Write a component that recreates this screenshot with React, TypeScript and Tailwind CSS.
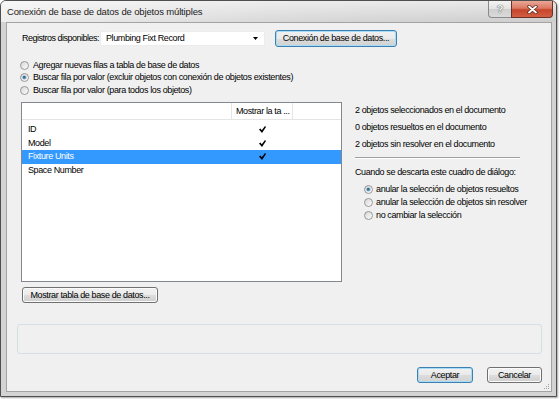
import React from "react";

function Radio({ checked }: { checked?: boolean }) {
  return (
    <svg width="9" height="9" viewBox="0 0 9 9" className="shrink-0">
      <defs>
        <linearGradient id="rb" x1="0" y1="0" x2="1" y2="1">
          <stop offset="0" stopColor="#d4d4d4" />
          <stop offset="1" stopColor="#ffffff" />
        </linearGradient>
        <radialGradient id="rd" cx="0.4" cy="0.4" r="0.6">
          <stop offset="0" stopColor="#1f4f73" />
          <stop offset="1" stopColor="#8cbfe0" />
        </radialGradient>
      </defs>
      <circle cx="4.5" cy="4.5" r="4" fill="url(#rb)" stroke="#8f8f8f" strokeWidth="0.9" />
      {checked && <circle cx="4.5" cy="4.5" r="2.1" fill="url(#rd)" />}
    </svg>
  );
}

function Check() {
  return (
    <svg width="7" height="7" viewBox="0 0 7 7">
      <path d="M0 3.6 L1.4 2.6 L2.8 4.3 L6 0 L7 0.9 L3 6.9 Z" fill="#000" />
    </svg>
  );
}

const btnNormal =
  "flex items-center justify-center whitespace-nowrap rounded-[3px] border border-[#707070] bg-[linear-gradient(#f2f2f2_0%,#ebebeb_50%,#dddddd_51%,#cfcfcf_100%)] shadow-[inset_0_0_0_1px_#fbfbfb]";
const btnDefault =
  "flex items-center justify-center whitespace-nowrap rounded-[3px] border border-[#3c7fb1] bg-[linear-gradient(#f1f1f1_0%,#e9e9e9_50%,#dcdcdc_51%,#d2d2d2_100%)] shadow-[inset_0_0_0_1px_#a6dcf6]";

const App = () => {
  const rows = [
    { name: "ID", show: true },
    { name: "Model", show: true },
    { name: "Fixture Units", show: true, selected: true },
    { name: "Space Number", show: false },
  ];

  return (
    <div className="w-[560px] h-[399px] bg-white font-['Liberation_Sans',Arial,sans-serif] text-[9px] leading-none tracking-[-0.38px] text-black whitespace-nowrap">
      <div className="w-[557px] h-[397px] flex flex-col rounded-t-[6px] border border-[#4f4f4f] bg-[#d3d3d3] shadow-[1px_1px_2px_rgba(0,0,0,0.35)]">
        {/* Title bar */}
        <div className="h-[21px] flex justify-between rounded-t-[5px] bg-[linear-gradient(to_bottom,rgba(255,255,255,0.55),rgba(255,255,255,0)),linear-gradient(to_right,#ededed,#d6d6d6_55%,#cdcdcd)]">
          <div className="pl-[6px] pt-[6px] text-[9.5px] tracking-[-0.15px] text-[#1b1b1b]">
            Conexión de base de datos de objetos múltiples
          </div>
          <div className="flex mr-[3px] h-[17px]">
            <div className="w-[23px] h-[17px] flex items-center justify-center rounded-bl-[4px] border border-t-0 border-r-0 border-[#8a8a8a] bg-[linear-gradient(#f4f4f4,#e2e2e2_50%,#cfcfcf_51%,#dadada)]">
              <span className="text-[11px] font-bold text-[#f4f4f4] [text-shadow:0_0_1px_#555,0_0_1px_#555]">
                ?
              </span>
            </div>
            <div className="w-[42px] h-[17px] flex items-center justify-center rounded-br-[4px] border border-t-0 border-[#6e3023] bg-[linear-gradient(#eaa898,#db7862_45%,#c5452b_55%,#d45e42)]">
              <svg width="11" height="9" viewBox="0 0 11 9">
                <path d="M2 1.5 L9 7.5 M9 1.5 L2 7.5" stroke="#5b2a20" strokeWidth="3.4" strokeLinecap="round" />
                <path d="M2 1.5 L9 7.5 M9 1.5 L2 7.5" stroke="#ffffff" strokeWidth="1.8" strokeLinecap="round" />
              </svg>
            </div>
          </div>
        </div>

        {/* Client area */}
        <div className="relative ml-[5px] w-[546px] h-[370px] flex flex-col border border-[#a3a3a3] bg-[#f0f0f0]">
          {/* Record selection */}
          <div className="mt-[7px] h-[17px] flex items-center pl-[15px]">
            <div className="w-[78px] shrink-0 tracking-[-0.5px]">Registros disponibles:</div>
            <div className="w-[165px] h-[15px] flex items-center pl-[5px] pr-[6px] bg-white border border-[#ececec]">
              <span>Plumbing Fixt Record</span>
              <svg width="5" height="3" viewBox="0 0 5 3" className="ml-auto">
                <path d="M0 0 H5 L2.5 3 Z" fill="#000" />
              </svg>
            </div>
            <button className={`${btnDefault} ml-[10px] w-[122px] h-[17px]`}>
              Conexión de base de datos...
            </button>
          </div>

          {/* Mode options */}
          <div className="mt-[12px] pl-[13px] flex flex-col">
            <div className="h-[12.5px] flex items-center gap-[4px]">
              <Radio />
              <span>Agregar nuevas filas a tabla de base de datos</span>
            </div>
            <div className="h-[12.5px] flex items-center gap-[4px]">
              <Radio checked />
              <span>Buscar fila por valor (excluir objetos con conexión de objetos existentes)</span>
            </div>
            <div className="h-[12.5px] flex items-center gap-[4px]">
              <Radio />
              <span>Buscar fila por valor (para todos los objetos)</span>
            </div>
          </div>

          {/* Field list + status */}
          <div className="mt-[5.5px] pl-[14px] flex h-[180px]">
            <div className="w-[321px] h-[180px] flex flex-col border border-[#828790] bg-white">
              <div className="h-[17px] flex border-b border-[#e5e5e5]">
                <div className="w-[210px] border-r border-[#e5e5e5]" />
                <div className="w-[61px] flex items-center pl-[4px] border-r border-[#e5e5e5]">
                  Mostrar la ta ...
                </div>
              </div>
              <div className="pt-[3px] flex flex-col">
                {rows.map((r) => (
                  <div
                    key={r.name}
                    className={`h-[13.5px] flex items-center ${r.selected ? "bg-[#3399ff] text-white" : ""}`}
                  >
                    <div className="w-[210px] pl-[6px]">{r.name}</div>
                    <div className="w-[61px] flex justify-center">{r.show && <Check />}</div>
                  </div>
                ))}
              </div>
            </div>

            <div className="ml-[13px] flex flex-col">
              <div className="h-[17px] flex items-center">2 objetos seleccionados en el documento</div>
              <div className="h-[17px] flex items-center">0 objetos resueltos en el documento</div>
              <div className="h-[17px] flex items-center">2 objetos sin resolver en el documento</div>
              <div className="mt-[4px] w-[165px] h-[2px] border-t border-[#a0a0a0] border-b border-b-white" />
              <div className="mt-[7px] h-[13px] flex items-center">Cuando se descarta este cuadro de diálogo:</div>
              <div className="mt-[4px] pl-[9px] flex flex-col">
                <div className="h-[13px] flex items-center gap-[3px]">
                  <Radio checked />
                  <span>anular la selección de objetos resueltos</span>
                </div>
                <div className="h-[13px] flex items-center gap-[3px]">
                  <Radio />
                  <span>anular la selección de objetos sin resolver</span>
                </div>
                <div className="h-[13px] flex items-center gap-[3px]">
                  <Radio />
                  <span>no cambiar la selección</span>
                </div>
              </div>
            </div>
          </div>

          <button className={`${btnNormal} mt-[5px] ml-[15px] w-[136px] h-[16px]`}>
            Mostrar tabla de base de datos...
          </button>

          {/* Empty group box */}
          <div className="mt-[21px] ml-[10px] w-[525px] h-[30px] rounded-[3px] border border-[#d5dfe5]" />

          {/* Dialog buttons */}
          <div className="mt-[13px] pr-[9px] flex justify-end gap-[14px]">
            <button className={`${btnDefault} w-[56px] h-[16px]`}>Aceptar</button>
            <button className={`${btnNormal} w-[55px] h-[16px]`}>Cancelar</button>
          </div>

          {/* Size grip */}
          <svg width="7" height="7" viewBox="0 0 7 7" className="absolute right-[1px] bottom-[1px]">
            {[
              [5, 1],
              [3, 3],
              [5, 3],
              [1, 5],
              [3, 5],
              [5, 5],
            ].map(([x, y]) => (
              <rect key={`${x}-${y}`} x={x} y={y} width="1" height="1" fill="#a0a0a0" />
            ))}
          </svg>
        </div>
      </div>
    </div>
  );
};

export default App;
